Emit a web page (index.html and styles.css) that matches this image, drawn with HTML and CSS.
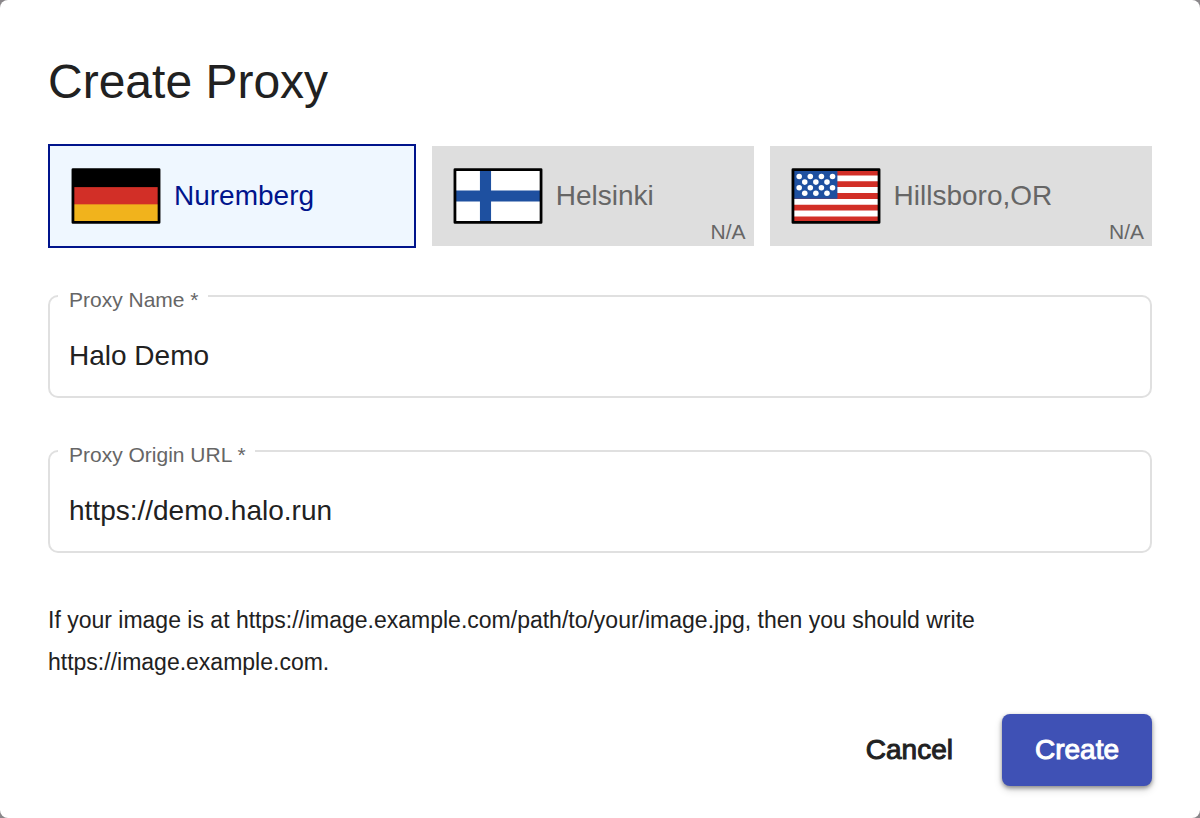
FILE: index.html
```html
<!DOCTYPE html>
<html lang="en">
<head>
<meta charset="utf-8">
<title>Create Proxy</title>
<link rel="stylesheet" href="styles.css">
</head>
<body>
<main class="dialog">
  <h1 class="dialog-title">Create Proxy</h1>
  <form class="form">
    <div class="regions">
      <button type="button" class="region region-selected" aria-pressed="true">
        <svg class="flag" viewBox="0 0 72 72" aria-hidden="true">
          <rect x="5" y="17" width="62" height="38" fill="#000"/>
          <rect x="5" y="29.6" width="62" height="13" fill="#d22f27"/>
          <rect x="5" y="42" width="62" height="13" fill="#f1b31c"/>
          <rect x="5" y="17" width="62" height="38" fill="none" stroke="#000" stroke-width="2" stroke-linejoin="round"/>
        </svg>
        <span>Nuremberg</span>
      </button>
      <button type="button" class="region" disabled>
        <svg class="flag" viewBox="0 0 72 72" aria-hidden="true">
          <rect x="5" y="17" width="62" height="38" fill="#fff"/>
          <path d="M23 17h8v15h36v8H31v15h-8V40H5v-8h18z" fill="#1e50a0"/>
          <rect x="5" y="17" width="62" height="38" fill="none" stroke="#000" stroke-width="2" stroke-linejoin="round"/>
        </svg>
        <span>Helsinki</span>
        <span class="region-status">N/A</span>
      </button>
      <button type="button" class="region" disabled>
        <svg class="flag" viewBox="0 0 72 72" aria-hidden="true">
          <rect x="5" y="17" width="62" height="38" fill="#fff"/>
          <path d="M5 17h62v4.2H5zM5 25.4h62v4.2H5zM5 33.9h62v4.2H5zM5 42.3h62v4.2H5zM5 50.8h62V55H5z" fill="#d22f27"/>
          <rect x="5" y="17" width="32" height="21" fill="#1e50a0"/>
          <g fill="#fff">
            <circle cx="9.5" cy="22" r="2"/><circle cx="17.5" cy="22" r="2"/><circle cx="25.5" cy="22" r="2"/><circle cx="33.5" cy="22" r="2"/>
            <circle cx="13.5" cy="26" r="2"/><circle cx="21.5" cy="26" r="2"/><circle cx="29.5" cy="26" r="2"/>
            <circle cx="9.5" cy="30" r="2"/><circle cx="17.5" cy="30" r="2"/><circle cx="25.5" cy="30" r="2"/><circle cx="33.5" cy="30" r="2"/>
            <circle cx="13.5" cy="34" r="2"/><circle cx="21.5" cy="34" r="2"/><circle cx="29.5" cy="34" r="2"/>
          </g>
          <rect x="5" y="17" width="62" height="38" fill="none" stroke="#000" stroke-width="2" stroke-linejoin="round"/>
        </svg>
        <span>Hillsboro,OR</span>
        <span class="region-status">N/A</span>
      </button>
    </div>
    <div class="fields">
      <fieldset class="field">
        <legend class="field-legend"><label for="proxy-name">Proxy Name *</label></legend>
        <input class="field-input" id="proxy-name" type="text" value="Halo Demo" required>
      </fieldset>
      <fieldset class="field">
        <legend class="field-legend"><label for="proxy-url">Proxy Origin URL *</label></legend>
        <input class="field-input" id="proxy-url" type="text" value="https://demo.halo.run" spellcheck="false" required>
      </fieldset>
    </div>
    <p class="hint">If your image is at https://image.example.com/path/to/your/image.jpg, then you should write https://image.example.com.</p>
    <div class="actions">
      <button type="button" class="button">Cancel</button>
      <button type="submit" class="button button-primary">Create</button>
    </div>
  </form>
</main>
</body>
</html>
```
FILE: styles.css
```css
* {
  box-sizing: border-box;
}

body {
  margin: 0;
  background: #8a878a;
  color: #212121;
  font-family: "Liberation Sans", Arial, sans-serif;
}

.dialog {
  min-height: 100vh;
  padding: 48px 48px 32px;
  border-radius: 8px;
  background: #fff;
}

.dialog-title {
  margin: 0 0 28px;
  font-size: 48px;
  font-weight: 400;
  line-height: 68px;
}

.regions {
  display: flex;
  align-items: center;
  gap: 16px;
}

.region {
  position: relative;
  display: flex;
  flex: 1 1 auto;
  align-items: center;
  gap: 8px;
  padding: 0 16px;
  border: 0;
  background: #dedede;
  color: #666;
  font: inherit;
  font-size: 28px;
}

.region-selected {
  border: 2px solid #00148c;
  background: #eff7ff;
  color: #00148c;
}

.region-status {
  position: absolute;
  right: 8px;
  bottom: 2px;
  font-size: 21px;
  line-height: 24px;
}

.flag {
  flex: none;
  width: 100px;
  height: 100px;
}

.fields {
  display: grid;
  gap: 37px;
  margin-top: 32px;
}

.field {
  min-width: 0;
  margin: 0;
  padding: 0 8px;
  border: 2px solid #e0e0e0;
  border-radius: 10px;
}

.field-legend {
  padding: 8px 9px 0 11px;
  color: #666;
  font-size: 21px;
  line-height: 24px;
}

.field-input {
  display: block;
  width: 100%;
  padding: 28px 11px 24px;
  border: 0;
  outline: 0;
  background: transparent;
  color: inherit;
  font: inherit;
  font-size: 28px;
  line-height: 32px;
}

.hint {
  margin: 46px 0 31px;
  font-size: 23px;
  line-height: 42px;
}

.actions {
  display: flex;
  justify-content: flex-end;
  gap: 16px;
}

.button {
  padding: 0 33px;
  border: 0;
  border-radius: 8px;
  background: transparent;
  color: inherit;
  font: inherit;
  font-size: 28px;
  line-height: 72px;
  -webkit-text-stroke: 1px currentColor;
}

.button-primary {
  background: #3f51b5;
  box-shadow: 0 2px 4px rgba(0, 0, 0, 0.4), 0 4px 8px rgba(0, 0, 0, 0.14);
  color: #fff;
}
```
